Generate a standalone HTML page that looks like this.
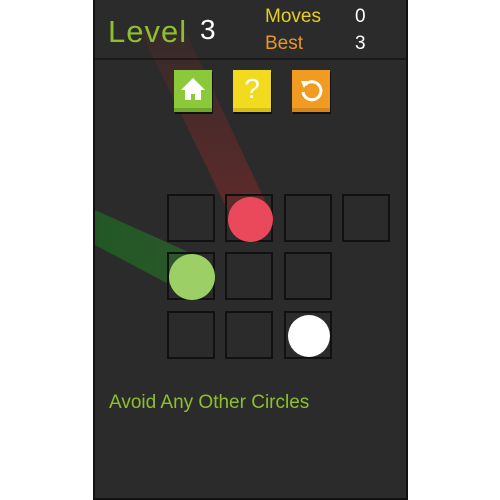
<!DOCTYPE html><html><head><style>
body{margin:0;width:500px;height:500px;background:#fff;position:relative;overflow:hidden;font-family:"Liberation Sans",sans-serif}
#p{position:absolute;left:93px;top:0;width:311px;height:498px;background:#2a2b2a;border:2px solid #111;border-top:none;overflow:hidden}
.t{position:absolute;white-space:nowrap}
.b{position:absolute;top:70px;width:38px;height:42px;box-shadow:1px 2px 0 #111}
.c{position:absolute;width:48px;height:48px;border:2px solid #111;box-sizing:border-box}
</style></head><body>
<div id="p">
<svg width="311" height="498" style="position:absolute;left:0;top:0">
<defs><linearGradient id="r" x1="0" y1="0" x2="0" y2="1"><stop offset="0" stop-color="#a02a2a" stop-opacity="0.1"/><stop offset="1" stop-color="#a02a2a" stop-opacity="0.45"/></linearGradient>
<linearGradient id="g" x1="0" y1="0" x2="1" y2="0"><stop offset="0" stop-color="#1f6a22" stop-opacity="0.7"/><stop offset="1" stop-color="#2a7a2a" stop-opacity="0.55"/></linearGradient></defs>
<polygon points="45,30 90,30 172,205 135,215" fill="url(#r)"/>
<polygon points="0,210 100,255 85,290 0,245" fill="url(#g)"/>
<line x1="0" y1="59" x2="311" y2="59" stroke="#151515" stroke-width="1.5"/>
</svg>
<div class="t" style="left:13px;top:14px;font-size:31px;color:#8dbf2e;letter-spacing:1px">Level</div>
<div class="t" style="left:105px;top:14px;font-size:28px;color:#fff">3</div>
<div class="t" style="left:170px;top:6px;font-size:19px;color:#e6cf1f">Moves</div>
<div class="t" style="left:170px;top:33px;font-size:19px;color:#e8962a">Best</div>
<div class="t" style="left:260px;top:6px;font-size:19px;color:#fff">0</div>
<div class="t" style="left:260px;top:33px;font-size:19px;color:#fff">3</div>
<div class="b" style="left:79px;background:#8bc93a;border-bottom:4px solid #6ea52b;height:38px">
<svg width="38" height="38"><path d="M19 8 L7 20 L11 20 L11 30 L17 30 L17 24 L21 24 L21 30 L27 30 L27 20 L31 20 Z" fill="#fff"/></svg></div>
<div class="b" style="left:138px;background:#f2da1e;border-bottom:4px solid #d4be18;height:38px;color:#fff;font-size:28px;text-align:center;line-height:38px">?</div>
<div class="b" style="left:197px;background:#f29b22;border-bottom:4px solid #d4861c;height:38px">
<svg width="38" height="38"><path d="M13 15 A9 9 0 1 1 11 22" fill="none" stroke="#fff" stroke-width="3"/><path d="M9 11 L16 11 L12 18 Z" fill="#fff"/></svg></div>
<div class="c" style="left:72px;top:194px"></div>
<div class="c" style="left:130px;top:194px"></div>
<div class="c" style="left:189px;top:194px"></div>
<div class="c" style="left:247px;top:194px"></div>
<div class="c" style="left:72px;top:252px"></div>
<div class="c" style="left:130px;top:252px"></div>
<div class="c" style="left:189px;top:252px"></div>
<div class="c" style="left:72px;top:311px"></div>
<div class="c" style="left:130px;top:311px"></div>
<div class="c" style="left:189px;top:311px"></div>
<div style="position:absolute;left:133px;top:197px;width:45px;height:45px;border-radius:50%;background:#e9495a"></div>
<div style="position:absolute;left:74px;top:254px;width:46px;height:46px;border-radius:50%;background:#9ccf66"></div>
<div style="position:absolute;left:193px;top:315px;width:42px;height:42px;border-radius:50%;background:#fff"></div>
<div class="t" style="left:14px;top:392px;font-size:19px;color:#8dbf2e">Avoid Any Other Circles</div>
</div>
</body></html>
